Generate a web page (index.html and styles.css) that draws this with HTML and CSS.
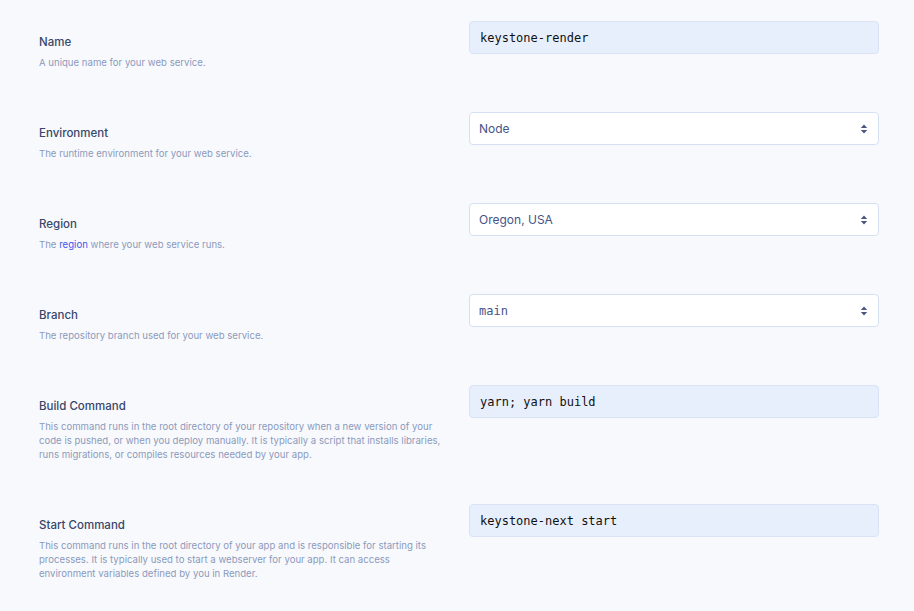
FILE: index.html
```html
<!DOCTYPE html>
<html lang="en">
<head>
<meta charset="utf-8">
<title>Web service settings</title>
<link rel="stylesheet" href="styles.css">
</head>
<body>
<main class="form">
  <div class="row">
    <div class="info">
      <div class="title">Name</div>
      <div class="desc">A unique name for your web service.</div>
    </div>
    <div class="field"><div class="input mono">keystone-render</div></div>
  </div>
  <div class="row">
    <div class="info">
      <div class="title">Environment</div>
      <div class="desc">The runtime environment for your web service.</div>
    </div>
    <div class="field"><div class="select"><span>Node</span><svg class="arrows" width="8" height="10" viewBox="0 0 8 10"><path d="M4 0.5 L7.2 4 H0.8 Z M4 9.5 L7.2 6 H0.8 Z" fill="#4a5580"/></svg></div></div>
  </div>
  <div class="row">
    <div class="info">
      <div class="title">Region</div>
      <div class="desc">The <a href="#" class="link">region</a> where your web service runs.</div>
    </div>
    <div class="field"><div class="select"><span>Oregon, USA</span><svg class="arrows" width="8" height="10" viewBox="0 0 8 10"><path d="M4 0.5 L7.2 4 H0.8 Z M4 9.5 L7.2 6 H0.8 Z" fill="#4a5580"/></svg></div></div>
  </div>
  <div class="row">
    <div class="info">
      <div class="title">Branch</div>
      <div class="desc">The repository branch used for your web service.</div>
    </div>
    <div class="field"><div class="select"><span class="mono">main</span><svg class="arrows" width="8" height="10" viewBox="0 0 8 10"><path d="M4 0.5 L7.2 4 H0.8 Z M4 9.5 L7.2 6 H0.8 Z" fill="#4a5580"/></svg></div></div>
  </div>
  <div class="row">
    <div class="info">
      <div class="title">Build Command</div>
      <div class="desc">This command runs in the root directory of your repository when a new version of your code is pushed, or when you deploy manually. It is typically a script that installs libraries, runs migrations, or compiles resources needed by your app.</div>
    </div>
    <div class="field"><div class="input mono">yarn; yarn build</div></div>
  </div>
  <div class="row">
    <div class="info">
      <div class="title">Start Command</div>
      <div class="desc">This command runs in the root directory of your app and is responsible for starting its processes. It is typically used to start a webserver for your app. It can access environment variables defined by you in Render.</div>
    </div>
    <div class="field"><div class="input mono">keystone-next start</div></div>
  </div>
</main>
</body>
</html>
```
FILE: styles.css
```css
html, body {
  margin: 0;
  padding: 0;
  background: #f8f9fc;
}
body {
  font-family: Inter, "Noto Sans", "Liberation Sans", sans-serif;
  -webkit-font-smoothing: antialiased;
}
.form {
  display: flex;
  flex-direction: column;
  gap: 42px;
  padding: 21px 35px 0 39px;
}
.row {
  display: flex;
  gap: 20px;
  align-items: flex-start;
}
.info {
  width: 410px;
  flex: none;
  padding-top: 11px;
}
.title {
  font-size: 11.5px;
  line-height: 20px;
  font-weight: 500;
  color: #37466b;
}
.desc {
  margin-top: 4px;
  font-size: 9.6px;
  line-height: 14px;
  color: #8b99bd;
}
.link {
  color: #4155f0;
  text-decoration: none;
}
.field {
  width: 410px;
  flex: none;
}
.input, .select {
  box-sizing: border-box;
  height: 33px;
  border-radius: 4px;
  display: flex;
  align-items: center;
  padding: 0 10px;
}
.input {
  background: #e8effc;
  border: 1px solid #dae3f5;
  color: #111;
}
.select {
  background: #fff;
  border: 1px solid #d6e0f3;
  color: #46548a;
  font-size: 12px;
  justify-content: space-between;
  padding-left: 9px;
  padding-right: 10px;
}
.mono {
  font-family: "DejaVu Sans Mono", "Liberation Mono", monospace;
  font-size: 12px;
}
.arrows {
  display: block;
}
```
